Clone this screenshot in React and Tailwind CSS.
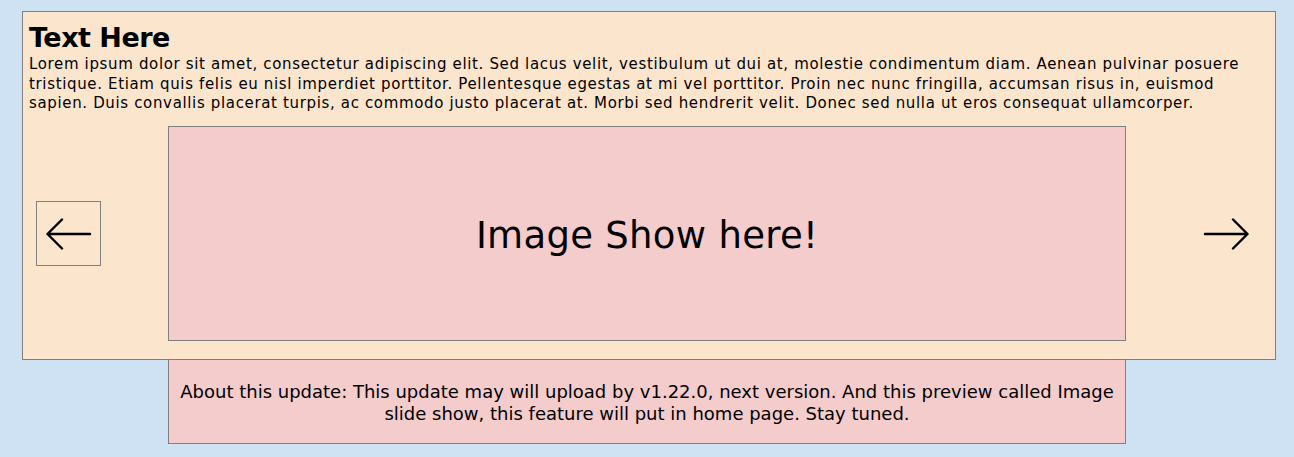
export default function App() {
  const font = { fontFamily: '"DejaVu Sans", "Liberation Sans", sans-serif' };
  return (
    <div className="w-[1294px] h-[457px] bg-[#cfe2f3] pt-[11px] pl-[22px]" style={font}>
      <div className="w-[1254px] h-[349px] bg-[#fce5cd] border border-[#808080] flex flex-col pl-[6px] pr-[12px]">
        <h1 className="text-[27px] font-bold leading-[30px] tracking-[-0.5px] text-black mt-[11px]">Text Here</h1>
        <p className="text-[15px] leading-[19.5px] tracking-[0.65px] text-black whitespace-nowrap mt-[2px]">
          <span className="block">Lorem ipsum dolor sit amet, consectetur adipiscing elit. Sed lacus velit, vestibulum ut dui at, molestie condimentum diam. Aenean pulvinar posuere</span>
          <span className="block">tristique. Etiam quis felis eu nisl imperdiet porttitor. Pellentesque egestas at mi vel porttitor. Proin nec nunc fringilla, accumsan risus in, euismod</span>
          <span className="block">sapien. Duis convallis placerat turpis, ac commodo justo placerat at. Morbi sed hendrerit velit. Donec sed nulla ut eros consequat ullamcorper.</span>
        </p>
        <div className="flex items-center mt-[12px] -mr-[12px] -ml-[6px] pl-[13px]">
          <button className="w-[65px] h-[65px] border border-[#808080] flex items-center justify-center pt-[2px]">
            <svg width="46" height="32" viewBox="0 0 46 32" fill="none" stroke="black" strokeWidth="2.4" strokeLinecap="round" strokeLinejoin="round">
              <path d="M1.5 16H44M16 1.5L1.5 16L16 30.5" />
            </svg>
          </button>
          <div className="ml-[67px] w-[958px] h-[215px] bg-[#f4cccc] border border-[#808080] flex items-center justify-center pt-[5px]">
            <span className="text-[37px] tracking-[0.3px] text-black">Image Show here!</span>
          </div>
          <button className="ml-[67px] w-[65px] h-[65px] flex items-center justify-center pt-[2px]">
            <svg width="46" height="32" viewBox="0 0 46 32" fill="none" stroke="black" strokeWidth="2.4" strokeLinecap="round" strokeLinejoin="round">
              <path d="M2 16H44.5M30 1.5L44.5 16L30 30.5" />
            </svg>
          </button>
        </div>
      </div>
      <div className="ml-[146px] -mt-px w-[958px] h-[85px] bg-[#f4cccc] border border-[#808080] flex items-center justify-center text-center pt-[2px]">
        <p className="text-[18px] leading-[22px] text-black">
          About this update: This update may will upload by v1.22.0, next version. And this preview called Image<br />slide show, this feature will put in home page. Stay tuned.
        </p>
      </div>
    </div>
  );
}
